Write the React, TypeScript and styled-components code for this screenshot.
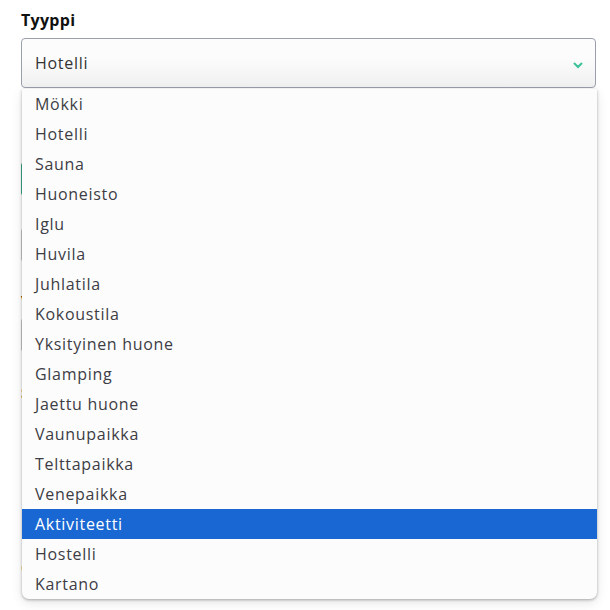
import styled, { createGlobalStyle } from "styled-components";

const GlobalStyle = createGlobalStyle`
  html, body {
    margin: 0;
    padding: 0;
    background: #ffffff;
  }
  body {
    font-family: "Open Sans", "DejaVu Sans", sans-serif;
    color: #333;
  }
`;

const types = [
  "Mökki",
  "Hotelli",
  "Sauna",
  "Huoneisto",
  "Iglu",
  "Huvila",
  "Juhlatila",
  "Kokoustila",
  "Yksityinen huone",
  "Glamping",
  "Jaettu huone",
  "Vaunupaikka",
  "Telttapaikka",
  "Venepaikka",
  "Aktiviteetti",
  "Hostelli",
  "Kartano",
];

const Page = styled.div`
  padding: 9px 14px 0 21px;
  width: 610px;
  height: 610px;
  box-sizing: border-box;
  overflow: hidden;
`;

const Label = styled.div`
  font-size: 16px;
  font-weight: 700;
  letter-spacing: 0.3px;
  color: #111;
  height: 29px;
  line-height: 22px;
`;

const Field = styled.div`
  position: relative;
`;

const SelectBox = styled.div`
  height: 50px;
  box-sizing: border-box;
  border: 1px solid #9aa0ab;
  border-radius: 4px;
  background: linear-gradient(#fcfcfc 40%, #f0f0f0);
  display: flex;
  align-items: center;
  justify-content: space-between;
  padding: 0 12px 0 13px;
  font-size: 16px;
  letter-spacing: 0.7px;
  color: #333;
`;

const Menu = styled.ul`
  position: absolute;
  top: 51px;
  left: 1px;
  right: -1px;
  margin: 0;
  padding: 0;
  list-style: none;
  background: #fcfcfc;
  border-radius: 0 0 7px 7px;
  box-shadow: 0 1px 3px rgba(0, 0, 0, 0.3), 0 4px 12px rgba(0, 0, 0, 0.1);
  overflow: hidden;
  z-index: 2;
`;

const Option = styled.li<{ $active?: boolean }>`
  height: 30px;
  line-height: 30px;
  padding-left: 13px;
  font-size: 16px;
  letter-spacing: 0.7px;
  color: ${(p) => (p.$active ? "#ffffff" : "#3d3d45")};
  background: ${(p) => (p.$active ? "#1967d2" : "transparent")};
`;

const Behind = styled.div`
  display: flex;
  flex-direction: column;
`;

const GreenButton = styled.div`
  margin-top: 75px;
  height: 32px;
  width: 200px;
  background: #3aa88a;
  border-radius: 2px;
`;

const GreyInput = styled.div<{ $top: number }>`
  margin-top: ${(p) => p.$top}px;
  height: 32px;
  border: 1px solid #c8c8c8;
  border-radius: 3px;
`;

const BgLabel = styled.div<{ $top: number }>`
  margin-top: ${(p) => p.$top}px;
  font-size: 15px;
  font-weight: 700;
  color: #5a3a10;
`;

const Chevron = () => (
  <svg width="10" height="7" viewBox="0 0 10 7" style={{ marginTop: 4 }}>
    <path d="M1.5 1.5 L5 5 L8.5 1.5" fill="none" stroke="#3cc29a" strokeWidth="2" strokeLinecap="round" />
  </svg>
);

export default function App() {
  return (
    <>
      <GlobalStyle />
      <Page>
        <Label>Tyyppi</Label>
        <Field>
          <SelectBox>
            <span>Hotelli</span>
            <Chevron />
          </SelectBox>
          <Menu>
            {types.map((t) => (
              <Option key={t} $active={t === "Aktiviteetti"}>
                {t}
              </Option>
            ))}
          </Menu>
          <Behind>
            <GreenButton />
            <GreyInput $top={33} />
            <BgLabel $top={28}>V</BgLabel>
            <GreyInput $top={8} />
            <BgLabel $top={30}>S</BgLabel>
            <BgLabel $top={155}>C</BgLabel>
          </Behind>
        </Field>
      </Page>
    </>
  );
}
